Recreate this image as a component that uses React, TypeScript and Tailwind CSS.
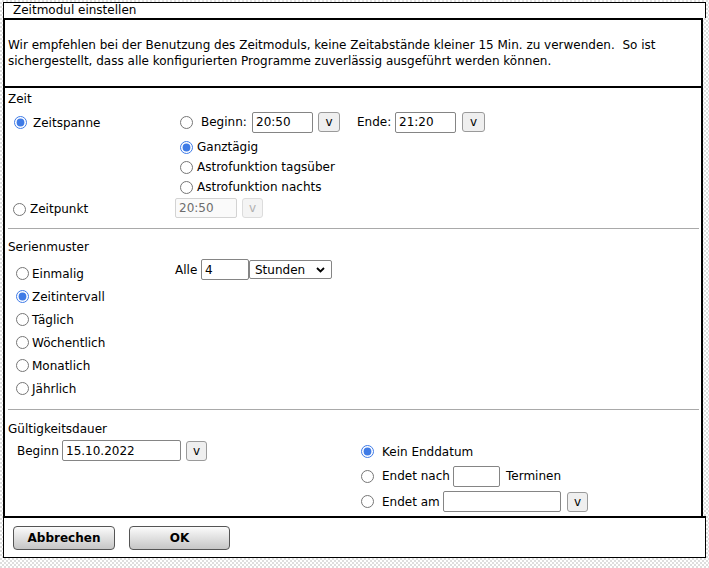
import React from 'react';

type RadioProps = { checked?: boolean; className?: string };

const Radio = ({ checked = false, className = '' }: RadioProps) => (
  <input
    type="radio"
    checked={checked}
    readOnly
    className={`m-0 h-[13px] w-[13px] shrink-0 accent-[#3f7be6] ${className}`}
  />
);

type FieldProps = { value?: string; className: string; disabled?: boolean };

const Field = ({ value = '', className, disabled = false }: FieldProps) => (
  <input
    type="text"
    value={value}
    readOnly
    disabled={disabled}
    className={`rounded-[2px] border px-[3px] text-[12px] outline-none ${
      disabled
        ? 'border-[#d3d3d3] bg-[#fafafa] text-[#6d6d6d]'
        : 'border-[#858585] bg-white text-black'
    } ${className}`}
  />
);

type PickProps = { className: string; disabled?: boolean };

const PickBtn = ({ className, disabled = false }: PickProps) => (
  <button
    disabled={disabled}
    className={`flex items-center justify-center rounded-[3px] border text-[12px] leading-none ${
      disabled
        ? 'border-[#dcdcdc] bg-[#f4f4f4] text-[#b0b0b0]'
        : 'border-[#9a9a9a] bg-[#efefef] text-black'
    } ${className}`}
  >
    v
  </button>
);

export default function App() {
  return (
    <div className="h-[568px] w-full overflow-hidden bg-[repeating-conic-gradient(#dedede_0%_25%,#ffffff_0%_50%)] bg-[length:4px_4px] pl-[3px] pt-[2px] font-['DejaVu_Sans',Verdana,sans-serif] text-[12px] text-black">
      {/* title */}
      <div className="h-[16px] w-[703px] border-x border-t border-black bg-white pl-[9px] leading-[15px]">
        Zeitmodul einstellen
      </div>

      {/* hint */}
      <div className="h-[68px] w-[700px] border-x-2 border-t-2 border-black bg-white pl-[3px] pt-[17px] leading-[16px] whitespace-nowrap">
        Wir empfehlen bei der Benutzung des Zeitmoduls, keine Zeitabstände kleiner 15 Min. zu verwenden.&nbsp; So ist
        <br />
        sichergestellt, dass alle konfigurierten Programme zuverlässig ausgeführt werden können.
      </div>

      {/* main */}
      <div className="h-[430px] w-[700px] overflow-hidden border-x-2 border-t-2 border-black bg-white pl-[3px] pr-[2px]">
        {/* Zeit */}
        <div className="mt-[3px] h-[16px] leading-[16px]">Zeit</div>

        <div className="mt-[4px] flex h-[22px] items-center">
          <div className="flex w-[167px] items-center pl-[6px] pt-[1px]">
            <Radio checked />
            <span className="ml-[6px]">Zeitspanne</span>
          </div>
          <div className="flex items-center pl-[5px]">
            <Radio />
            <span className="ml-[8px] w-[51px]">Beginn:</span>
            <Field value="20:50" className="h-[21px] w-[61px]" />
            <PickBtn className="ml-[5px] h-[20px] w-[22px]" />
            <span className="ml-[17px] w-[38px]">Ende:</span>
            <Field value="21:20" className="h-[21px] w-[61px]" />
            <PickBtn className="ml-[6px] h-[20px] w-[23px]" />
          </div>
        </div>

        <div className="mt-[4px] flex flex-col pl-[172px]">
          {[
            ['Ganztägig', true],
            ['Astrofunktion tagsüber', false],
            ['Astrofunktion nachts', false],
          ].map(([label, on]) => (
            <div key={label as string} className="flex h-[20px] items-center">
              <Radio checked={on as boolean} />
              <span className="ml-[4px]">{label as string}</span>
            </div>
          ))}
        </div>

        <div className="flex h-[22px] items-center">
          <div className="flex w-[167px] items-center pl-[5px] pt-[2px]">
            <Radio />
            <span className="ml-[4px]">Zeitpunkt</span>
          </div>
          <Field value="20:50" disabled className="h-[20px] w-[62px]" />
          <PickBtn disabled className="ml-[5px] h-[20px] w-[21px]" />
        </div>

        <div className="mt-[9px] h-px bg-[#a9a9a9]" />

        {/* Serienmuster */}
        <div className="mt-[10px] h-[16px] leading-[16px]">Serienmuster</div>

        <div className="mt-[4px] flex">
          <div className="flex w-[167px] flex-col pl-[8px] pt-[3px]">
            {[
              ['Einmalig', false],
              ['Zeitintervall', true],
              ['Täglich', false],
              ['Wöchentlich', false],
              ['Monatlich', false],
              ['Jährlich', false],
            ].map(([label, on]) => (
              <div key={label as string} className="flex h-[23px] items-center">
                <Radio checked={on as boolean} />
                <span className="ml-[3px]">{label as string}</span>
              </div>
            ))}
          </div>
          <div className="flex h-[21px] items-center">
            <span className="w-[26px]">Alle</span>
            <Field value="4" className="h-[21px] w-[48px]" />
            <div className="flex h-[19px] w-[83px] items-center justify-between rounded-[2px] border border-[#858585] bg-white pl-[5px] pr-[5px]">
              <span>Stunden</span>
              <svg width="9" height="6" viewBox="0 0 9 6" className="mr-[1px]">
                <path d="M1 1l3.5 3.5L8 1" fill="none" stroke="#000" strokeWidth="1.8" />
              </svg>
            </div>
          </div>
        </div>

        <div className="mt-[9px] h-px bg-[#a9a9a9]" />

        {/* Gueltigkeit */}
        <div className="mt-[11px] h-[16px] leading-[16px]">Gültigkeitsdauer</div>

        <div className="mt-[3px] flex">
          <div className="flex h-[21px] w-[353px] items-center pl-[9px]">
            <span className="w-[45px]">Beginn</span>
            <Field value="15.10.2022" className="h-[21px] w-[119px]" />
            <PickBtn className="ml-[5px] h-[20px] w-[21px]" />
          </div>
          <div className="flex flex-col gap-[3px]">
            <div className="flex h-[22px] items-center pt-[1px]">
              <Radio checked />
              <span className="ml-[8px]">Kein Enddatum</span>
            </div>
            <div className="flex h-[22px] items-center">
              <Radio />
              <span className="ml-[8px] w-[71px]">Endet nach</span>
              <Field className="h-[21px] w-[47px]" />
              <span className="ml-[6px]">Terminen</span>
            </div>
            <div className="flex h-[22px] items-center pt-[1px]">
              <Radio />
              <span className="ml-[8px] w-[61px]">Endet am</span>
              <Field className="h-[21px] w-[118px]" />
              <PickBtn className="ml-[6px] h-[20px] w-[21px]" />
            </div>
          </div>
        </div>
      </div>

      {/* buttons */}
      <div className="flex h-[42px] w-[703px] gap-[14px] border-x border-b border-t-2 border-black bg-white pl-[9px] pt-[8px]">
        <button className="h-[24px] w-[102px] rounded-[4px] border border-[#555] bg-linear-to-b from-[#fbfbfb] to-[#c6c6c6] text-[12px] font-bold text-black">
          Abbrechen
        </button>
        <button className="h-[24px] w-[101px] rounded-[4px] border border-[#555] bg-linear-to-b from-[#fbfbfb] to-[#c6c6c6] text-[12px] font-bold text-black">
          OK
        </button>
      </div>
    </div>
  );
}
